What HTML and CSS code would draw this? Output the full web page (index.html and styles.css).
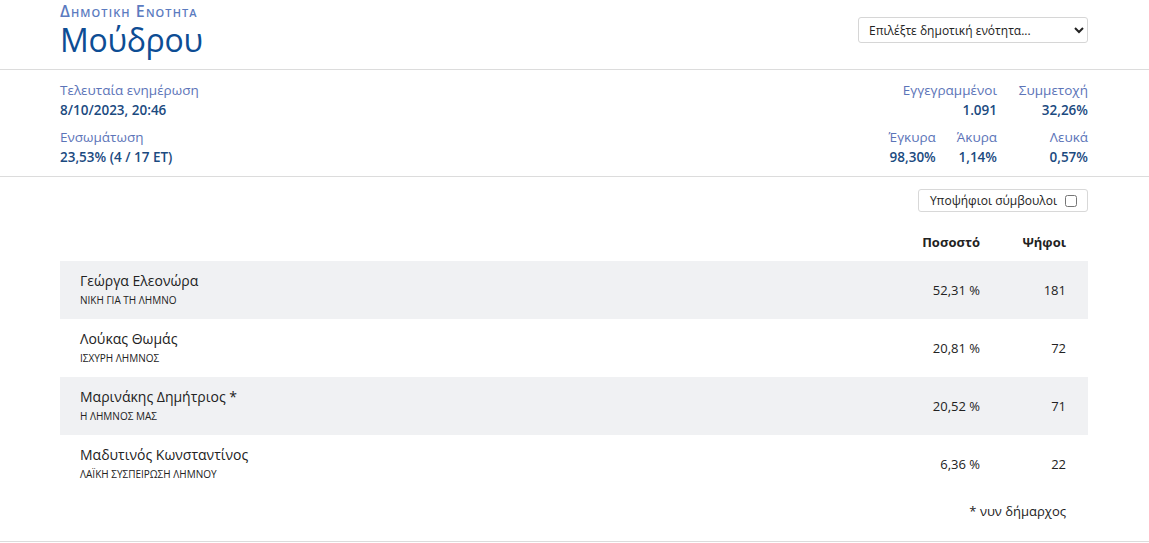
FILE: index.html
```html
<!DOCTYPE html>
<html lang="el">
<head>
<meta charset="utf-8">
<title>Μούδρου</title>
<link rel="stylesheet" href="styles.css">
</head>
<body>
<header class="top">
  <div class="wrap top-inner">
    <div class="heading">
      <div class="kicker">Δημοτικη Ενοτητα</div>
      <h1 class="title">Μούδρου</h1>
    </div>
    <select class="unit-select">
      <option>Επιλέξτε δημοτική ενότητα...</option>
    </select>
  </div>
</header>
<section class="stats">
  <div class="wrap stats-inner">
    <div class="stats-left">
      <div class="stat">
        <div class="lbl">Τελευταία ενημέρωση</div>
        <div class="val">8/10/2023, 20:46</div>
      </div>
      <div class="stat">
        <div class="lbl">Ενσωμάτωση</div>
        <div class="val">23,53% (4 / 17 ΕΤ)</div>
      </div>
    </div>
    <div class="stats-right">
      <div class="srow">
        <div class="stat r"><div class="lbl">Εγγεγραμμένοι</div><div class="val">1.091</div></div>
        <div class="stat r last"><div class="lbl">Συμμετοχή</div><div class="val">32,26%</div></div>
      </div>
      <div class="srow">
        <div class="stat r"><div class="lbl">Έγκυρα</div><div class="val">98,30%</div></div>
        <div class="stat r"><div class="lbl">Άκυρα</div><div class="val">1,14%</div></div>
        <div class="stat r last"><div class="lbl">Λευκά</div><div class="val">0,57%</div></div>
      </div>
    </div>
  </div>
</section>
<main class="results">
  <div class="wrap">
    <div class="toolbar">
      <label class="toggle">Υποψήφιοι σύμβουλοι <input type="checkbox" class="cb"></label>
    </div>
    <div class="thead">
      <div class="c-name"></div>
      <div class="c-pct">Ποσοστό</div>
      <div class="c-votes">Ψήφοι</div>
    </div>
    <div class="row shade">
      <div class="c-name"><div class="name">Γεώργα Ελεονώρα</div><div class="party">ΝΙΚΗ ΓΙΑ ΤΗ ΛΗΜΝΟ</div></div>
      <div class="c-pct">52,31 %</div>
      <div class="c-votes">181</div>
    </div>
    <div class="row">
      <div class="c-name"><div class="name">Λούκας Θωμάς</div><div class="party">ΙΣΧΥΡΗ ΛΗΜΝΟΣ</div></div>
      <div class="c-pct">20,81 %</div>
      <div class="c-votes">72</div>
    </div>
    <div class="row shade">
      <div class="c-name"><div class="name">Μαρινάκης Δημήτριος *</div><div class="party">Η ΛΗΜΝΟΣ ΜΑΣ</div></div>
      <div class="c-pct">20,52 %</div>
      <div class="c-votes">71</div>
    </div>
    <div class="row">
      <div class="c-name"><div class="name">Μαδυτινός Κωνσταντίνος</div><div class="party">ΛΑΪΚΗ ΣΥΣΠΕΙΡΩΣΗ ΛΗΜΝΟΥ</div></div>
      <div class="c-pct">6,36 %</div>
      <div class="c-votes">22</div>
    </div>
    <div class="note">* νυν δήμαρχος</div>
  </div>
</main>
</body>
</html>
```
FILE: styles.css
```css
* { box-sizing: border-box; }
html, body { margin: 0; padding: 0; }
body {
  font-family: "Open Sans", "Noto Sans", "DejaVu Sans", sans-serif;
  color: #222;
  background: #fff;
  font-size: 13px;
}
.wrap {
  width: 1028px;
  margin-left: 60px;
}
.top {
  border-bottom: 1px solid #dcdcdc;
  height: 70px;
}
.top-inner {
  display: flex;
  justify-content: space-between;
  align-items: flex-start;
}
.heading {
  display: flex;
  flex-direction: column;
  gap: 2px;
}
.kicker {
  font-variant: small-caps;
  font-weight: 600;
  font-size: 16px;
  letter-spacing: 1.1px;
  color: #5b7bc0;
  line-height: 18px;
  margin-top: 2px;
}
.title {
  margin: 0;
  font-weight: 400;
  font-size: 32px;
  line-height: 36px;
  color: #0d4d94;
  letter-spacing: -0.3px;
}
.unit-select {
  margin-top: 17px;
  width: 230px;
  height: 26px;
  font-family: inherit;
  font-size: 12px;
  color: #222;
  background: #fff;
  border: 1px solid #d6d6d6;
  border-radius: 3px;
  padding: 0 6px;
}
.stats {
  border-bottom: 1px solid #dcdcdc;
  height: 107px;
}
.stats-inner {
  display: flex;
  justify-content: space-between;
  padding-top: 10px;
}
.stats-left, .stats-right {
  display: flex;
  flex-direction: column;
  gap: 7px;
}
.srow {
  display: flex;
  justify-content: flex-end;
  gap: 21px;
}
.stat.r { text-align: right; }
.stat.last { width: 70px; }
.lbl {
  color: #5c74b8;
  font-size: 13.5px;
  line-height: 20px;
}
.val {
  color: #1b4a7f;
  font-weight: 600;
  font-size: 13.5px;
  line-height: 20px;
}
.toolbar {
  display: flex;
  justify-content: flex-end;
  padding-top: 12px;
}
.toggle {
  display: flex;
  align-items: center;
  gap: 8px;
  height: 23px;
  padding: 0 10px 0 11px;
  border: 1px solid #d8d8d8;
  border-radius: 3px;
  font-size: 12px;
  color: #222;
}
.cb {
  margin: 0;
  width: 12px;
  height: 12px;
}
.thead, .row {
  display: flex;
  align-items: center;
  padding: 0 22px 0 20px;
}
.thead {
  height: 49px;
  font-weight: 700;
  font-size: 13px;
  color: #222;
  padding-top: 11px;
}
.row {
  height: 58px;
}
.row.shade { background: #f0f1f3; }
.c-name { flex: 1; }
.c-pct { width: 120px; text-align: right; }
.c-votes { width: 86px; text-align: right; }
.row .c-pct, .row .c-votes { font-size: 13px; color: #222; }
.name {
  font-size: 14px;
  line-height: 20px;
  color: #222;
}
.party {
  font-size: 10px;
  line-height: 18px;
  color: #222;
}
.note {
  text-align: right;
  padding-right: 22px;
  padding-top: 8px;
  font-size: 13px;
  line-height: 20px;
}
.results { border-bottom: 1px solid #dcdcdc; height: 365px; }
```
